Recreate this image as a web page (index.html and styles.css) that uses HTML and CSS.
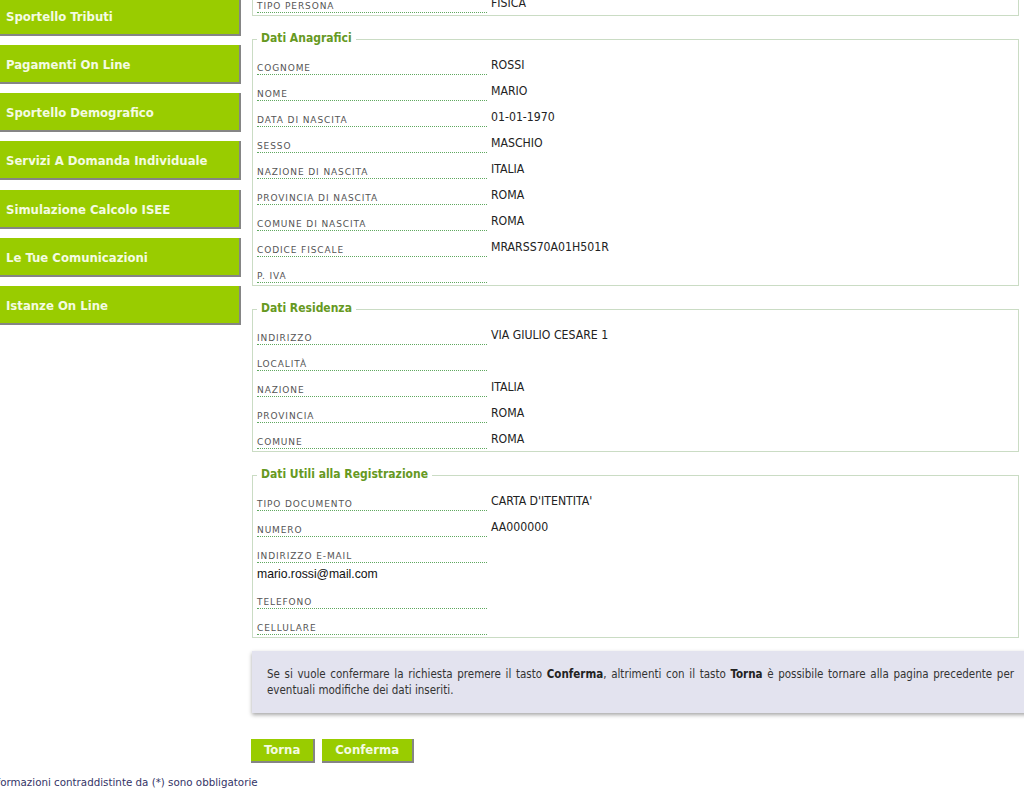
FILE: index.html
```html
<!DOCTYPE html>
<html lang="it">
<head>
<meta charset="utf-8">
<title>Riepilogo registrazione</title>
<link rel="stylesheet" href="styles.css">
</head>
<body>
<div class="page">
  <div class="layout">
    <nav class="sidebar">
      <a class="nav-btn" href="#">Sportello Tributi</a>
      <a class="nav-btn" href="#">Pagamenti On Line</a>
      <a class="nav-btn" href="#">Sportello Demografico</a>
      <a class="nav-btn" href="#">Servizi A Domanda Individuale</a>
      <a class="nav-btn" href="#">Simulazione Calcolo ISEE</a>
      <a class="nav-btn" href="#">Le Tue Comunicazioni</a>
      <a class="nav-btn" href="#">Istanze On Line</a>
    </nav>
    <main class="content">
      <fieldset class="group first">
        <legend>Tipologia</legend>
        <div class="row"><span class="label">TIPO PERSONA</span><span class="value">FISICA</span></div>
      </fieldset>

      <fieldset class="group">
        <legend>Dati Anagrafici</legend>
        <div class="row"><span class="label">COGNOME</span><span class="value">ROSSI</span></div>
        <div class="row"><span class="label">NOME</span><span class="value">MARIO</span></div>
        <div class="row"><span class="label">DATA DI NASCITA</span><span class="value">01-01-1970</span></div>
        <div class="row"><span class="label">SESSO</span><span class="value">MASCHIO</span></div>
        <div class="row"><span class="label">NAZIONE DI NASCITA</span><span class="value">ITALIA</span></div>
        <div class="row"><span class="label">PROVINCIA DI NASCITA</span><span class="value">ROMA</span></div>
        <div class="row"><span class="label">COMUNE DI NASCITA</span><span class="value">ROMA</span></div>
        <div class="row"><span class="label">CODICE FISCALE</span><span class="value">MRARSS70A01H501R</span></div>
        <div class="row"><span class="label">P. IVA</span><span class="value"></span></div>
      </fieldset>

      <fieldset class="group">
        <legend>Dati Residenza</legend>
        <div class="row"><span class="label">INDIRIZZO</span><span class="value">VIA GIULIO CESARE 1</span></div>
        <div class="row"><span class="label">LOCALITÀ</span><span class="value"></span></div>
        <div class="row"><span class="label">NAZIONE</span><span class="value">ITALIA</span></div>
        <div class="row"><span class="label">PROVINCIA</span><span class="value">ROMA</span></div>
        <div class="row"><span class="label">COMUNE</span><span class="value">ROMA</span></div>
      </fieldset>

      <fieldset class="group">
        <legend>Dati Utili alla Registrazione</legend>
        <div class="row"><span class="label">TIPO DOCUMENTO</span><span class="value">CARTA D'ITENTITA'</span></div>
        <div class="row"><span class="label">NUMERO</span><span class="value">AA000000</span></div>
        <div class="row stacked"><span class="label">INDIRIZZO E-MAIL</span><span class="value">mario.rossi@mail.com</span></div>
        <div class="row"><span class="label">TELEFONO</span><span class="value"></span></div>
        <div class="row"><span class="label">CELLULARE</span><span class="value"></span></div>
      </fieldset>

      <div class="info">
        Se si vuole confermare la richiesta premere il tasto <b>Conferma</b>, altrimenti con il tasto <b>Torna</b> è possibile tornare alla pagina precedente per eventuali modifiche dei dati inseriti.
      </div>

      <div class="actions">
        <button class="btn" type="button">Torna</button>
        <button class="btn" type="button">Conferma</button>
      </div>
    </main>
  </div>
  <p class="note">Le informazioni contraddistinte da (*) sono obbligatorie</p>
</div>
</body>
</html>
```

FILE: styles.css
```css
html, body {
  margin: 0;
  padding: 0;
  overflow: hidden;
  background: #ffffff;
}

.page {
  padding-top: 1px;
  margin-top: -30.5px;
}

.layout {
  display: flex;
  align-items: flex-start;
}

.sidebar {
  flex: none;
  width: 241px;
  padding-top: 26px;
  display: flex;
  flex-direction: column;
}

.nav-btn {
  display: flex;
  align-items: center;
  box-sizing: content-box;
  height: 35px;
  padding: 2px 0 0 6px;
  margin-bottom: 9.33px;
  background: #99cc00;
  border-right: 2px solid #858585;
  border-bottom: 2px solid #858585;
  color: #f4fbe2;
  font-family: "DejaVu Sans Condensed", "DejaVu Sans", sans-serif;
  font-stretch: condensed;
  font-weight: bold;
  font-size: 13px;
  text-decoration: none;
}

.content {
  flex: none;
  width: 767px;
  margin-left: 11px;
}

.group {
  margin: 17px 0 0;
  padding: 2px 0 2px 4px;
  border: 1px solid #cadcc4;
  min-width: 0;
}

.group.first {
  margin-top: 0;
}

.group legend {
  padding: 0 4px 4px;
  margin: 0;
  color: #669922;
  font-family: "DejaVu Sans Condensed", "DejaVu Sans", sans-serif;
  font-stretch: condensed;
  font-weight: bold;
  font-size: 12px;
  line-height: 10px;
}

.row {
  display: flex;
  height: 26px;
}

.label {
  flex: none;
  box-sizing: border-box;
  width: 230px;
  height: 26px;
  padding-top: 14px;
  border-bottom: 1px dotted #5fa85f;
  color: #555555;
  font-family: "DejaVu Sans", sans-serif;
  font-size: 9px;
  line-height: 11px;
  letter-spacing: 0.9px;
  white-space: nowrap;
}

.value {
  margin-left: 4px;
  padding-top: 9px;
  color: #222222;
  font-family: "DejaVu Sans Condensed", "DejaVu Sans", sans-serif;
  font-stretch: condensed;
  font-size: 12.2px;
  line-height: 15px;
  white-space: nowrap;
}

.row.stacked {
  flex-direction: column;
  height: auto;
}

.row.stacked .value {
  margin-left: 0;
  padding: 4px 0 2px;
  color: #111111;
  font-family: "Liberation Sans", Arial, sans-serif;
  font-stretch: normal;
  font-size: 12.2px;
  line-height: 14px;
}

.info {
  margin: 13px -10px 0 0;
  padding: 15px;
  background: #e3e3ef;
  box-shadow: 0 2px 4px rgba(0, 0, 0, 0.35);
  color: #333333;
  font-family: "DejaVu Sans Condensed", "DejaVu Sans", sans-serif;
  font-stretch: condensed;
  font-size: 11.5px;
  line-height: 16px;
  text-align: justify;
}

.info b {
  color: #222222;
}

.actions {
  display: flex;
  gap: 7px;
  margin: 26px 0 0 -1px;
}

.btn {
  height: 24px;
  margin: 0;
  padding: 0 13px;
  background: #99cc00;
  border: none;
  border-right: 2px solid #858585;
  border-bottom: 2px solid #858585;
  color: #f4fbe2;
  font-family: "DejaVu Sans Condensed", "DejaVu Sans", sans-serif;
  font-stretch: condensed;
  font-weight: bold;
  font-size: 13px;
  line-height: 22px;
  cursor: pointer;
}

.note {
  margin: 13px 0 0 -28px;
  color: #333366;
  font-family: "DejaVu Sans", sans-serif;
  font-size: 10.3px;
  line-height: 12px;
}
```
